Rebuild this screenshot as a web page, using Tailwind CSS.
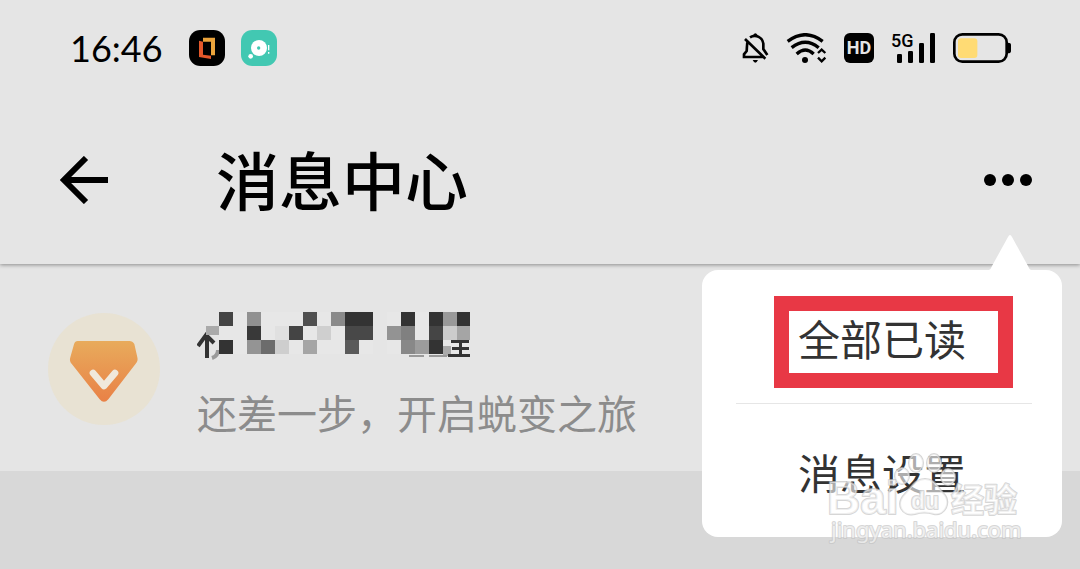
<!DOCTYPE html>
<html lang="zh-CN">
<head>
    <meta charset="UTF-8">
    <meta name="viewport" content="width=device-width, initial-scale=1.0">
    <title>消息中心</title>
    <script src="https://cdn.jsdelivr.net/npm/@tailwindcss/browser@4"></script>
</head>
<body class="bg-[#d8d8d8] min-h-screen overflow-x-hidden font-['Noto_Sans_CJK_SC',sans-serif]">
    <header class="relative z-10 bg-[#e5e5e5] shadow-[0_1px_4px_rgba(0,0,0,0.4)]">
        <!-- Status bar -->
        <div class="flex items-center justify-between h-24 pl-[70px] pr-[68px]">
            <div class="flex items-center gap-4">
                <span class="w-[103px] font-['Lato',sans-serif] text-4xl text-black">16:46</span>
                <svg class="size-9" viewBox="0 0 108 108">
                    <rect width="108" height="108" rx="34" fill="#000"/>
                    <path d="M42 23H78V76H66V35H42Z" fill="#eba43c"/>
                    <path d="M30 32L42 35V74L66 77V87L30 81Z" fill="#e4572a"/>
                </svg>
                <svg class="size-9" viewBox="0 0 108 108">
                    <rect width="108" height="108" rx="34" fill="#42c8b2"/>
                    <circle cx="54" cy="54" r="24" fill="#fff"/>
                    <circle cx="53" cy="54" r="5" fill="#42c8b2"/>
                    <circle cx="29" cy="79" r="7" fill="#fff"/>
                    <path d="M83 45V61M83 66V71" stroke="#fff" stroke-width="4"/>
                </svg>
            </div>
            <div class="flex items-center gap-[17px]">
                <svg class="w-[27px] h-[30px]" viewBox="33 54 81 90" fill="none" stroke="#000" stroke-width="8">
                    <path d="M57 67C75 56 95 68 97 86V102L109 120M50 79C47 87 48 101 47 108L39 118V126H99M42 72L103 131"/>
                    <path d="M66 61Q73 48 80 61Z" fill="#000" stroke="none"/>
                    <path d="M65 135H81Q73 151 65 135Z" fill="#000" stroke="none"/>
                </svg>
                <svg class="w-[41px] h-[30px]" viewBox="171 54 123 90" fill="none" stroke="#000" stroke-width="10">
                    <path d="M176 79Q229 39 281 79M188 98Q229 65 269 98M203 117Q229 93 254 117"/>
                    <circle cx="228" cy="135" r="9" fill="#000" stroke="none"/>
                    <path d="M267 114L278 104L289 114M267 128L278 139L289 128" stroke-width="7"/>
                </svg>
                <span class="flex items-center justify-center size-[30px] rounded-md bg-black text-[#e5e5e5] font-['Roboto',sans-serif] font-bold text-lg">HD</span>
                <div class="relative w-[45px] h-[30px]">
                    <span class="absolute left-0 top-0 font-['Roboto',sans-serif] font-medium text-lg leading-4 text-black">5G</span>
                    <svg class="w-[45px] h-[30px]" viewBox="483 54 135 90">
                        <rect x="501" y="117" width="15" height="27" rx="4"/>
                        <rect x="534" y="108" width="15" height="36" rx="4"/>
                        <rect x="567" y="84" width="15" height="60" rx="4"/>
                        <rect x="600" y="54" width="15" height="90" rx="4"/>
                    </svg>
                </div>
                <svg class="w-[59px] h-[30px]" viewBox="669 54 177 90">
                    <rect x="673" y="58" width="157" height="82" rx="24" fill="none" stroke="#000" stroke-width="8"/>
                    <rect x="684" y="70" width="58" height="59" rx="9" fill="#ffdb74"/>
                    <path d="M834 83Q843 83 843 90V108Q843 115 834 115Z"/>
                </svg>
            </div>
        </div>

        <!-- Title bar -->
        <div class="flex items-center h-[168px] pl-[60px] pr-12">
            <button type="button" aria-label="返回">
                <svg class="size-12" viewBox="0 0 48 48" fill="none" stroke="#000" stroke-width="6">
                    <path d="M48 24H4M26 2L4 24L26 46"/>
                </svg>
            </button>
            <h1 class="ml-[108px] pb-1 text-[63px] leading-[72px] font-medium text-black">消息中心</h1>
            <button type="button" aria-label="更多" class="ml-auto">
                <svg class="w-12 h-3" viewBox="0 0 48 12">
                    <circle cx="6" cy="6" r="6"/>
                    <circle cx="24" cy="6" r="6"/>
                    <circle cx="42" cy="6" r="6"/>
                </svg>
            </button>
        </div>

        <!-- Popup menu -->
        <div class="absolute right-[18px] top-[270px] w-[360px] bg-white rounded-2xl text-[42px] text-[#333]">
            <svg class="absolute right-[31px] bottom-full w-[42px] h-9" viewBox="0 0 42 36">
                <path d="M0 36Q2 35 3 32L19 3Q21 -1 23 3L39 32Q40 35 42 36Z" fill="#fff"/>
            </svg>
            <button type="button" class="block w-full h-[133px] pt-0.5">全部已读</button>
            <div class="ml-[34px] mr-[30px] border-t border-[#e6e6e6]"></div>
            <button type="button" class="block w-full h-[133px] pt-0.5">消息设置</button>
            <div class="absolute left-[72px] top-[26px] w-[239px] h-[92px] border-[15px] border-[#e83845] pointer-events-none"></div>
        </div>
    </header>

    <main>
        <!-- Message row -->
        <a href="#" class="flex items-center gap-9 h-[207px] pl-[47px] bg-[#e5e5e5]">
            <svg class="size-[114px] shrink-0" viewBox="0 0 342 342">
                <defs>
                    <linearGradient id="gem" x1="0" y1="0" x2="0" y2="1">
                        <stop offset="0" stop-color="#e8ab5c"/>
                        <stop offset="1" stop-color="#e98146"/>
                    </linearGradient>
                </defs>
                <circle cx="171" cy="174" r="168" fill="#e8e2d3"/>
                <path d="M92 90H247Q257 90 262 99L271 139Q274 150 266 158L184 265Q171 280 158 265L75 160Q66 151 70 139L81 100Q84 90 92 90Z" fill="url(#gem)"/>
                <path d="M138 186L171 225L204 186" fill="none" stroke="#f0e9dc" stroke-width="20" stroke-linecap="round" stroke-linejoin="round"/>
            </svg>
            <div class="pt-4">
                <!-- Masked name -->
                <svg class="w-[273px] h-[48px] mb-6" viewBox="0 0 273 48" shape-rendering="crispEdges" role="img" aria-label="名称已隐藏">
                    <g fill="#e7e7e7">
                        <rect x="22" y="0" width="154" height="42"/>
                        <rect x="190" y="0" width="83" height="42"/>
                    </g>
                    <g fill="none" stroke="#333" stroke-width="4" shape-rendering="auto">
                        <path d="M1 34L9 23L17 31M10 23V46"/>
                        <path d="M15 46Q21 44 21 38" stroke="#999"/>
                    </g>
                    <rect x="9" y="14" width="13" height="9" fill="#aaa"/>
                    <rect x="22" y="0" width="14" height="14" fill="#444"/>
                    <rect x="50" y="0" width="14" height="14" fill="#919191"/>
                    <rect x="106" y="0" width="14" height="14" fill="#505050"/>
                    <rect x="134" y="0" width="14" height="14" fill="#8a8a8a"/>
                    <rect x="148" y="0" width="28" height="14" fill="#333"/>
                    <rect x="204" y="0" width="14" height="14" fill="#333"/>
                    <rect x="232" y="0" width="14" height="14" fill="#333"/>
                    <rect x="246" y="0" width="14" height="14" fill="#999"/>
                    <rect x="260" y="0" width="13" height="14" fill="#333"/>
                    <rect x="50" y="14" width="14" height="14" fill="#393939"/>
                    <rect x="78" y="14" width="14" height="14" fill="#e0e0e0"/>
                    <rect x="92" y="14" width="14" height="14" fill="#444"/>
                    <rect x="120" y="14" width="14" height="14" fill="#cfcfcf"/>
                    <rect x="148" y="14" width="28" height="14" fill="#484848"/>
                    <rect x="190" y="14" width="14" height="14" fill="#939393"/>
                    <rect x="204" y="14" width="14" height="14" fill="#808080"/>
                    <rect x="232" y="14" width="14" height="14" fill="#454545"/>
                    <rect x="246" y="14" width="14" height="14" fill="#ccc"/>
                    <rect x="260" y="14" width="13" height="14" fill="#a5a5a5"/>
                    <rect x="22" y="28" width="14" height="14" fill="#333"/>
                    <rect x="50" y="28" width="14" height="14" fill="#949494"/>
                    <rect x="64" y="28" width="14" height="14" fill="#6c6c6c"/>
                    <rect x="78" y="28" width="14" height="14" fill="#cecece"/>
                    <rect x="106" y="28" width="14" height="14" fill="#a5a5a5"/>
                    <rect x="148" y="28" width="14" height="14" fill="#5a5a5a"/>
                    <rect x="204" y="28" width="14" height="14" fill="#888"/>
                    <rect x="218" y="28" width="14" height="14" fill="#9c9c9c"/>
                    <rect x="232" y="28" width="14" height="14" fill="#333"/>
                    <rect x="246" y="34" width="8" height="10" fill="#aaa"/>
                    <path d="M212 44H227M232 44H250" stroke="#999" stroke-width="2"/>
                    <path d="M254 29H272M255 36H272M251 43H273M263 28V44" stroke="#333" stroke-width="3"/>
                </svg>
                <p class="text-[40px] leading-[56px] text-[#8c8c8c]">还差一步，开启蜕变之旅</p>
            </div>
        </a>
    </main>

    <!-- Watermark -->
    <div class="absolute z-20 right-[51px] top-[453px] w-[202px] h-[96px] pointer-events-none">
        <svg class="w-[202px] h-[96px]" viewBox="0 0 202 96" fill="#fff" fill-opacity="0.6" stroke="#c4c4c4" stroke-opacity="0.7" paint-order="stroke" stroke-width="2" stroke-linejoin="round">
            <ellipse cx="75" cy="23" rx="7" ry="8"/>
            <ellipse cx="89" cy="10" rx="7" ry="9"/>
            <ellipse cx="107" cy="10" rx="7" ry="9"/>
            <ellipse cx="121" cy="24" rx="7" ry="8"/>
            <path d="M98 26C107 26 110 33 116 40C125 49 118 63 107 61Q97 58 88 61C75 64 68 51 78 41C85 34 88 26 98 26Z"/>
            <text x="0" y="61" font-family="Liberation Sans, sans-serif" font-weight="700" font-size="46">Bai</text>
            <text x="84" y="56" font-family="Liberation Sans, sans-serif" font-weight="700" font-size="23">du</text>
            <text x="124" y="59" font-family="Noto Sans CJK SC, sans-serif" font-weight="700" font-size="33">经验</text>
            <text x="4" y="85" font-family="Noto Sans, sans-serif" font-size="22">jingyan.baidu.com</text>
        </svg>
    </div>
</body>
</html>
